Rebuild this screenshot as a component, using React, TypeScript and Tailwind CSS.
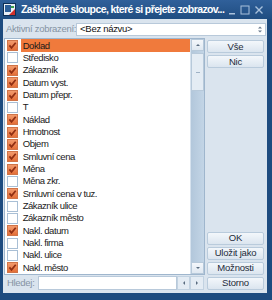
import React from "react";

const items: [string, boolean][] = [
  ["Doklad", true],
  ["Středisko", false],
  ["Zákazník", true],
  ["Datum vyst.", true],
  ["Datum přepr.", true],
  ["T", false],
  ["Náklad", true],
  ["Hmotnost", true],
  ["Objem", true],
  ["Smluvní cena", true],
  ["Měna", true],
  ["Měna zkr.", false],
  ["Smluvní cena v tuz.", true],
  ["Zákazník ulice", false],
  ["Zákazník město", false],
  ["Nakl. datum", true],
  ["Nakl. firma", false],
  ["Nakl. ulice", false],
  ["Nakl. město", true],
];

const font = { fontFamily: '"Liberation Sans", Arial, sans-serif' };

function Check({ on }: { on: boolean }) {
  if (!on) {
    return <div className="w-[11px] h-[11px] border border-[#a9bfd5] bg-white shrink-0" />;
  }
  return (
    <div className="w-[11px] h-[11px] border border-[#d07448] bg-gradient-to-b from-[#f29a6c] to-[#e46f38] shrink-0 flex items-center justify-center">
      <svg width="9" height="9" viewBox="0 0 9 9">
        <polyline points="1.4,4.4 3.5,6.9 7.7,1.8" fill="none" stroke="#8f2e12" strokeWidth="1.7" />
      </svg>
    </div>
  );
}

function Btn({ label }: { label: string }) {
  return (
    <div className="h-[13px] flex items-center justify-center border border-[#b9cbdc] rounded-[2px] bg-gradient-to-b from-[#f3f7fb] to-[#dbe5ef] text-[9.5px] text-[#1d2b3a] tracking-[-0.2px]">
      {label}
    </div>
  );
}

function Arrow({ dir }: { dir: "up" | "down" | "left" | "right" }) {
  const pts = {
    up: "2,5 4,3 6,5",
    down: "2,3 4,5 6,3",
    left: "5,2 3,4 5,6",
    right: "3,2 5,4 3,6",
  }[dir];
  return (
    <svg width="8" height="8" viewBox="0 0 8 8">
      <polygon points={pts} fill="#5a6c80" />
    </svg>
  );
}

export default function App() {
  return (
    <div className="w-[272px] h-[300px] flex flex-col bg-[#1d4b7f] overflow-hidden" style={font}>
      {/* Title bar */}
      <div className="h-[21px] flex items-center pl-[3px] pr-[8px] bg-gradient-to-b from-[#30609a] to-[#1f4d81]">
        <svg width="13" height="13" viewBox="0 0 13 13" className="shrink-0">
          <rect x="0.5" y="0.5" width="12" height="12" fill="#e9eff6" stroke="#0f2f55" />
          <rect x="2" y="2" width="6" height="7" fill="#2d5f99" />
          <polygon points="6,12 12,6 12,12" fill="#d0312b" />
          <rect x="8" y="3" width="3" height="2" fill="#3aa14a" />
        </svg>
        <span className="ml-[5px] text-white font-bold text-[10.5px] tracking-[-0.6px] whitespace-nowrap">
          Zaškrtněte sloupce, které si přejete zobrazov...
        </span>
        <div className="ml-auto flex items-center gap-[4px]">
          <svg width="8" height="10" viewBox="0 0 8 10">
            <rect x="1" y="8" width="6" height="1.5" fill="#a9c1dc" />
          </svg>
          <svg width="10" height="10" viewBox="0 0 10 10">
            <rect x="1" y="1" width="8" height="8" fill="none" stroke="#a9c1dc" strokeWidth="1" />
          </svg>
          <svg width="10" height="10" viewBox="0 0 10 10">
            <path d="M1.5 1.5 L8.5 8.5 M8.5 1.5 L1.5 8.5" stroke="#a9c1dc" strokeWidth="1.4" />
          </svg>
        </div>
      </div>

      {/* Body */}
      <div className="flex-1 ml-[3px] mr-[5px] mb-[7px] bg-[#dae4ee] flex flex-col">
        <div className="mt-[3px] h-[14px] flex items-center pl-[3px] pr-[1px]">
          <span className="text-[9.5px] text-[#8593a3] tracking-[-0.3px] whitespace-nowrap">Aktivní zobrazení:</span>
          <div className="ml-auto w-[190px] h-[13px] bg-white border border-[#b8c9da] flex items-center pl-[3px]">
            <span className="text-[9.5px] text-[#111] tracking-[-0.3px]">&lt;Bez názvu&gt;</span>
            <div className="ml-auto w-[10px] flex flex-col items-center justify-center">
              <svg width="6" height="9" viewBox="0 0 6 9">
                <polygon points="1,3.5 3,1.5 5,3.5" fill="#6a7b8e" />
                <polygon points="1,5.5 3,7.5 5,5.5" fill="#6a7b8e" />
              </svg>
            </div>
          </div>
        </div>

        <div className="mt-[2px] flex-1 flex pl-[1px] pr-[3px] pb-[3px] gap-[2px]">
          {/* Left column */}
          <div className="w-[201px] flex flex-col">
            <div className="flex-1 flex border border-[#9fb6cd] bg-white">
              <div className="flex-1 flex flex-col">
                {items.map(([label, on], i) => (
                  <div key={label} className="h-[12.35px] flex items-center">
                    <div className="ml-[2px]">
                      <Check on={on} />
                    </div>
                    <div
                      className={`ml-[2.7px] flex-1 h-full flex items-center pl-[2px] text-[9.5px] tracking-[-0.45px] whitespace-nowrap text-[#1a1a1a] ${
                        i === 0 ? "bg-[#f07a3c]" : ""
                      }`}
                    >
                      {label}
                    </div>
                  </div>
                ))}
              </div>
              {/* Scrollbar */}
              <div className="w-[14px] flex flex-col bg-gradient-to-r from-[#b2c7db] to-[#c3d5e6] border-l border-[#d6e2ee]">
                <div className="h-[12px] flex items-center justify-center border border-[#b7c9da] bg-gradient-to-b from-[#f4f7fb] to-[#dfe8f1]">
                  <Arrow dir="up" />
                </div>
                <div className="mt-[2px] h-[38px] border border-[#b7c9da] bg-[#e4ecf4] flex items-center justify-center">
                  <div className="w-[4px] h-[1px] bg-[#9fb2c6]" />
                </div>
                <div className="mt-auto h-[12px] flex items-center justify-center border border-[#b7c9da] bg-gradient-to-b from-[#f4f7fb] to-[#dfe8f1]">
                  <Arrow dir="down" />
                </div>
              </div>
            </div>
            <div className="mt-[1px] h-[14px] flex items-center">
              <span className="ml-[3px] text-[9.5px] text-[#8593a3] tracking-[-0.3px]">Hledej:</span>
              <div className="ml-[4px] w-[139px] h-[14px] bg-white border border-[#b8c9da]" />
              <div className="w-[13px] h-[14px] flex items-center justify-center border border-[#c2d2e1] bg-[#e4ecf4]">
                <Arrow dir="left" />
              </div>
              <div className="w-[14px] h-[14px] flex items-center justify-center border border-[#c2d2e1] bg-[#e4ecf4]">
                <Arrow dir="right" />
              </div>
            </div>
          </div>

          {/* Buttons */}
          <div className="w-[57px] flex flex-col pt-[2px] gap-[2px]">
            <Btn label="Vše" />
            <Btn label="Nic" />
            <div className="flex-1" />
            <Btn label="OK" />
            <Btn label="Uložit jako" />
            <Btn label="Možnosti" />
            <Btn label="Storno" />
          </div>
        </div>
      </div>
    </div>
  );
}
